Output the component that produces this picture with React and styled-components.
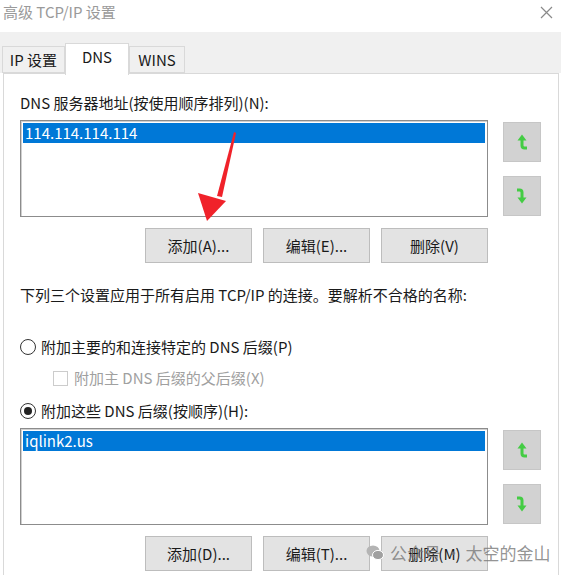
import React from "react";
import styled, { createGlobalStyle } from "styled-components";

const GlobalStyle = createGlobalStyle`
  html, body {
    margin: 0;
    padding: 0;
    background: #ffffff;
  }
  body {
    font-family: "Noto Sans CJK SC", "Noto Sans", sans-serif;
    color: #1a1a1a;
  }
`;

const Window = styled.div`
  position: relative;
  width: 561px;
  height: 575px;
  overflow: hidden;
  background: #ffffff;
`;

const TitleBar = styled.div`
  display: flex;
  align-items: center;
  justify-content: space-between;
  height: 24px;
  padding: 0 8px 8px 3px;
`;

const Title = styled.div`
  font-size: 15px;
  line-height: 20px;
  color: #9a9a9a;
`;

const TabStrip = styled.div`
  display: flex;
  align-items: flex-end;
  height: 41px;
  padding-left: 2px;
  background: #f0f0f0;
`;

const Tab = styled.div`
  position: relative;
  z-index: ${(p) => (p.$active ? 2 : 1)};
  box-sizing: border-box;
  width: ${(p) => p.$w}px;
  height: ${(p) => (p.$active ? 32 : 27)}px;
  margin-bottom: ${(p) => (p.$active ? -2 : 0)}px;
  display: flex;
  align-items: center;
  justify-content: center;
  padding-bottom: ${(p) => (p.$active ? 5 : 0)}px;
  border: 1px solid #d9d9d9;
  border-bottom: ${(p) => (p.$active ? "none" : "1px solid #d9d9d9")};
  background: ${(p) => (p.$active ? "#ffffff" : "#f0f0f0")};
  font-size: 15px;
  line-height: 20px;
  color: #1a1a1a;
`;

const Panel = styled.div`
  box-sizing: border-box;
  margin: 0 2px 0 3px;
  height: 510px;
  border: 1px solid #d9d9d9;
  border-bottom: none;
  background: #ffffff;
  padding: 19px 0 0 16px;
  display: flex;
  flex-direction: column;
`;

const Label = styled.div`
  font-size: 15px;
  line-height: 20px;
  margin-top: ${(p) => p.$mt || 0}px;
  color: ${(p) => (p.$disabled ? "#a0a0a0" : "#1a1a1a")};
`;

const ListRow = styled.div`
  display: flex;
  gap: 15px;
  margin-top: 7px;
`;

const ListBox = styled.div`
  box-sizing: border-box;
  width: 468px;
  height: 97px;
  border: 1px solid #8c8c8c;
  box-shadow: inset 1px 1px 0 #d0d0d0;
  padding: 2px;
  background: #ffffff;
`;

const ListItem = styled.div`
  height: 20px;
  padding-left: 2px;
  background: #0078d7;
  color: #ffffff;
  font-size: 15px;
  line-height: 20px;
`;

const SideColumn = styled.div`
  display: flex;
  flex-direction: column;
  gap: 14px;
  padding-top: 2px;
`;

const ArrowButton = styled.div`
  box-sizing: border-box;
  width: 38px;
  height: 40px;
  background: #d2d2d2;
  border: 1px solid #c6c6c6;
  display: flex;
  align-items: center;
  justify-content: center;
`;

const ButtonRow = styled.div`
  display: flex;
  justify-content: flex-end;
  gap: 11px;
  width: 468px;
  margin-top: 11px;
`;

const Button = styled.div`
  box-sizing: border-box;
  width: 107px;
  height: 35px;
  background: #e3e3e3;
  border: 1px solid #bdbdbd;
  display: flex;
  align-items: center;
  justify-content: center;
  font-size: 15px;
  color: #1a1a1a;
`;

const OptionRow = styled.div`
  display: flex;
  align-items: center;
  gap: ${(p) => p.$gap || 6}px;
  margin-top: ${(p) => p.$mt}px;
  margin-left: ${(p) => p.$ml || 0}px;
  height: 20px;
`;

const Radio = styled.span`
  box-sizing: border-box;
  width: 16px;
  height: 16px;
  border-radius: 50%;
  border: 1px solid #333333;
  background: #ffffff;
  display: flex;
  align-items: center;
  justify-content: center;
  &::after {
    content: "";
    display: ${(p) => (p.$checked ? "block" : "none")};
    width: 8px;
    height: 8px;
    border-radius: 50%;
    background: #222222;
  }
`;

const CheckBox = styled.span`
  box-sizing: border-box;
  width: 15px;
  height: 15px;
  border: 1px solid #cccccc;
  background: #ffffff;
`;

const CloseIcon = () => (
  <svg width="13" height="13" viewBox="0 0 13 13">
    <path d="M1 1 L12 12 M12 1 L1 12" stroke="#8a8a8a" strokeWidth="1.2" />
  </svg>
);

const UpIcon = () => (
  <svg width="12" height="18" viewBox="0 0 12 18">
    <path d="M1.5 7.5 L6 1.5 L10.5 7.5 Z" fill="#44cc44" />
    <path d="M6 6 L6 12.5 Q6 15 8.5 15 L11 15" stroke="#44cc44" strokeWidth="3" fill="none" />
  </svg>
);

const DownIcon = () => (
  <svg width="12" height="18" viewBox="0 0 12 18">
    <path d="M1 3 L3.5 3 Q6 3 6 5.5 L6 12" stroke="#44cc44" strokeWidth="3" fill="none" />
    <path d="M1.5 10.5 L6 16.5 L10.5 10.5 Z" fill="#44cc44" />
  </svg>
);

const RedArrow = styled.svg`
  position: absolute;
  left: 190px;
  top: 125px;
  z-index: 5;
`;

const Watermark = styled.div`
  position: absolute;
  left: 366px;
  top: 543px;
  z-index: 5;
  display: flex;
  align-items: center;
  gap: 6px;
  font-size: 17px;
  line-height: 20px;
  color: rgba(120, 120, 120, 0.8);
`;

const WeChatIcon = () => (
  <svg width="18" height="16" viewBox="0 0 18 16">
    <ellipse cx="7" cy="6" rx="6.5" ry="5.5" fill="#b4b4b4" />
    <ellipse cx="12" cy="10" rx="5.5" ry="4.6" fill="#a0a0a0" stroke="#ffffff" strokeWidth="1" />
  </svg>
);

const ListSection = ({ item }) => (
  <ListRow>
    <ListBox>
      <ListItem>{item}</ListItem>
    </ListBox>
    <SideColumn>
      <ArrowButton>
        <UpIcon />
      </ArrowButton>
      <ArrowButton>
        <DownIcon />
      </ArrowButton>
    </SideColumn>
  </ListRow>
);

export default function App() {
  return (
    <Window>
      <GlobalStyle />
      <TitleBar>
        <Title>高级 TCP/IP 设置</Title>
        <CloseIcon />
      </TitleBar>
      <TabStrip>
        <Tab $w={63}>IP 设置</Tab>
        <Tab $w={64} $active>DNS</Tab>
        <Tab $w={56}>WINS</Tab>
      </TabStrip>
      <Panel>
        <Label>DNS 服务器地址(按使用顺序排列)(N):</Label>
        <ListSection item="114.114.114.114" />
        <ButtonRow>
          <Button>添加(A)...</Button>
          <Button>编辑(E)...</Button>
          <Button>删除(V)</Button>
        </ButtonRow>
        <Label $mt={22}>下列三个设置应用于所有启用 TCP/IP 的连接。要解析不合格的名称:</Label>
        <OptionRow $mt={32} $gap={5}>
          <Radio />
          <Label>附加主要的和连接特定的 DNS 后缀(P)</Label>
        </OptionRow>
        <OptionRow $mt={11} $ml={33}>
          <CheckBox />
          <Label $disabled>附加主 DNS 后缀的父后缀(X)</Label>
        </OptionRow>
        <OptionRow $mt={13} $gap={5}>
          <Radio $checked />
          <Label>附加这些 DNS 后缀(按顺序)(H):</Label>
        </OptionRow>
        <ListSection item="iqlink2.us" />
        <ButtonRow>
          <Button>添加(D)...</Button>
          <Button>编辑(T)...</Button>
          <Button>删除(M)</Button>
        </ButtonRow>
      </Panel>
      <RedArrow width="50" height="100" viewBox="0 0 50 100">
        <path d="M44 7 L46 8 L32 72 L27 71 Z" fill="#f0222a" />
        <path d="M8 68 L36 76 L17 96 Z" fill="#f0222a" />
      </RedArrow>
      <Watermark>
        <WeChatIcon />
        <span>公众号 · 太空的金山</span>
      </Watermark>
    </Window>
  );
}
